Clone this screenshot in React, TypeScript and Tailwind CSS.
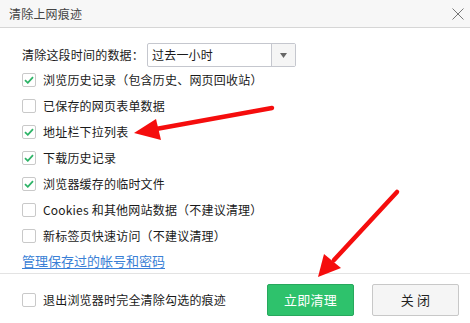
import { useState } from 'react';

const items = [
  { label: '浏览历史记录（包含历史、网页回收站）', on: true },
  { label: '已保存的网页表单数据', on: false },
  { label: '地址栏下拉列表', on: true },
  { label: '下载历史记录', on: true },
  { label: '浏览器缓存的临时文件', on: true },
  { label: 'Cookies 和其他网站数据（不建议清理）', on: false },
  { label: '新标签页快速访问（不建议清理）', on: false },
];

function Check({ on }: { on: boolean }) {
  return (
    <span className="w-[14px] h-[14px] rounded-[2px] border border-[#c9c9c9] bg-white flex items-center justify-center shrink-0">
      {on && (
        <svg width="10" height="8" viewBox="0 0 10 8">
          <path d="M1 4.2 L3.8 6.8 L9 1.2" fill="none" stroke="#2fb468" strokeWidth="1.8" />
        </svg>
      )}
    </span>
  );
}

export default function App() {
  const [checked, setChecked] = useState(items.map((i) => i.on));
  const [exitClear, setExitClear] = useState(false);

  return (
    <div
      className="relative w-[470px] h-[323px] bg-white overflow-hidden text-[#1a1a1a] text-[12px] tracking-[0.2px]"
      style={{ fontFamily: '"Microsoft YaHei", "Noto Sans CJK SC", "Noto Sans", sans-serif' }}
    >
      <div className="h-[28px] bg-[#f7f7f7] border-b border-[#d6d6d6] flex items-center justify-between pl-[9px] pr-[6px]">
        <span className="text-[12px] text-[#444]">清除上网痕迹</span>
        <svg width="12" height="12" viewBox="0 0 12 12">
          <path d="M0.5 0.5 L11.5 11.5 M11.5 0.5 L0.5 11.5" stroke="#777" strokeWidth="1" />
        </svg>
      </div>

      <div className="pl-[22px]">
        <div className="flex items-center h-[24px] mt-[15px]">
          <span className="w-[125px]">清除这段时间的数据：</span>
          <div className="w-[149px] h-[24px] border border-[#c5c7ce] rounded-[2px] flex">
            <span className="flex-1 pl-[4px] flex items-center">过去一小时</span>
            <span className="w-[24px] border-l border-[#c5c7ce] bg-[#f5f5f5] flex items-center justify-center">
              <svg width="7" height="5" viewBox="0 0 7 5">
                <path d="M0 0 H7 L3.5 5 Z" fill="#666" />
              </svg>
            </span>
          </div>
        </div>

        {items.map((it, i) => (
          <label
            key={it.label}
            className="flex items-center gap-[7px] h-[26px] cursor-pointer"
            onClick={() => setChecked((c) => c.map((v, j) => (j === i ? !v : v)))}
          >
            <Check on={checked[i]} />
            <span>{it.label}</span>
          </label>
        ))}

        <div className="h-[24px] flex items-center">
          <a className="text-[13px] tracking-normal text-[#3a7fd6] underline underline-offset-2 cursor-pointer">管理保存过的帐号和密码</a>
        </div>
      </div>

      <div className="border-t border-[#e3e3e3] h-[50px] flex items-center pl-[22px] pr-[11px] pt-[3px]">
        <label className="flex items-center gap-[7px] flex-1 cursor-pointer" onClick={() => setExitClear((v) => !v)}>
          <Check on={exitClear} />
          <span>退出浏览器时完全清除勾选的痕迹</span>
        </label>
        <button className="w-[87px] h-[32px] rounded-[2px] bg-[#2ec26c] border border-[#27a85d] text-white text-[13px]">
          立即清理
        </button>
        <button className="w-[87px] h-[32px] ml-[18px] rounded-[2px] bg-[#f5f5f5] border border-[#c8c8c8] text-[#222] text-[13px]">
          关 闭
        </button>
      </div>

      <svg className="absolute inset-0 pointer-events-none" width="470" height="323" viewBox="0 0 470 323">
        <line x1="272" y1="108" x2="156" y2="129" stroke="#f50d0d" strokeWidth="4.5" strokeLinecap="round" />
        <polygon points="134,133 156,119 161,140" fill="#f50d0d" />
        <line x1="397" y1="192" x2="334" y2="260" stroke="#f50d0d" strokeWidth="4.5" strokeLinecap="round" />
        <polygon points="318,277 324,254 341,268" fill="#f50d0d" />
      </svg>
    </div>
  );
}
